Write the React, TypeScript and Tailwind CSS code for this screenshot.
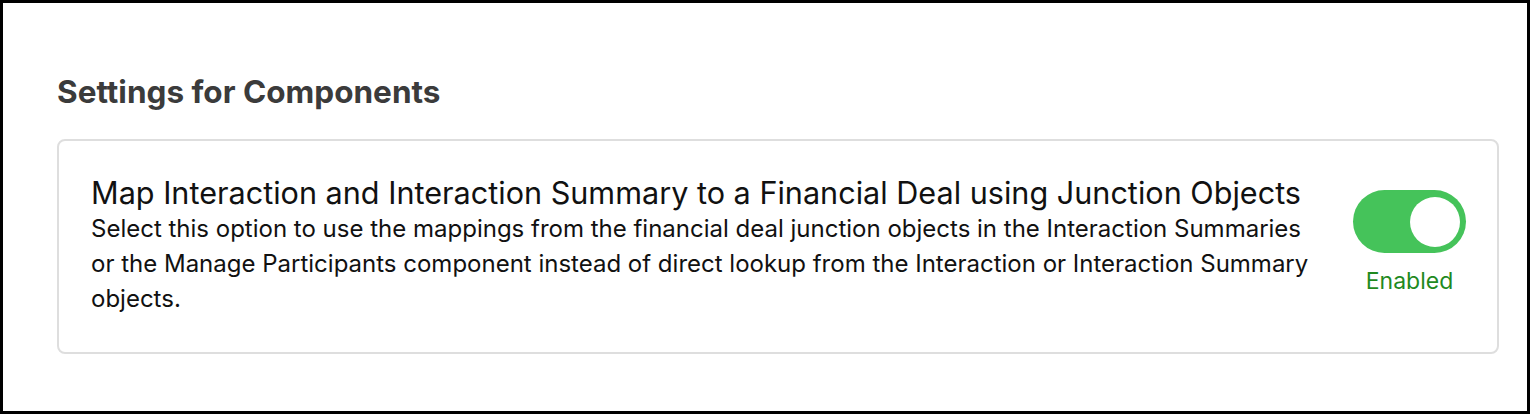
import React from "react";

export default function App() {
  return (
    <div
      className="w-[1530px] h-[414px] border-[3px] border-black bg-white pl-[54px] pr-[28px] pt-[68px]"
      style={{ fontFamily: "Inter, 'Noto Sans', sans-serif" }}
    >
      <h1 className="text-[31.5px] font-bold text-[#3b3b3b] leading-[42px]">Settings for Components</h1>
      <div className="mt-[26px] h-[215px] rounded-[8px] border-2 border-[#dedede] pl-[32px] pr-[31px] pt-[33px] flex items-start">
        <div className="w-[1226px]">
          <div className="text-[30.6px] leading-[37px] text-[#111]">
            Map Interaction and Interaction Summary to a Financial Deal using Junction Objects
          </div>
          <div className="text-[24px] leading-[35px] text-[#111]">
            Select this option to use the mappings from the financial deal junction objects in the Interaction Summaries
            or the Manage Participants component instead of direct lookup from the Interaction or Interaction Summary
            objects.
          </div>
        </div>
        <div className="ml-auto flex flex-col items-center mt-[16px]">
          <div className="w-[113px] h-[63px] rounded-full bg-[#45c35a] flex items-center justify-end pr-[6px]">
            <div className="w-[50px] h-[50px] rounded-full bg-white" />
          </div>
          <div className="mt-[14px] text-[23px] leading-[28px] text-[#1f8a1f]">Enabled</div>
        </div>
      </div>
    </div>
  );
}
